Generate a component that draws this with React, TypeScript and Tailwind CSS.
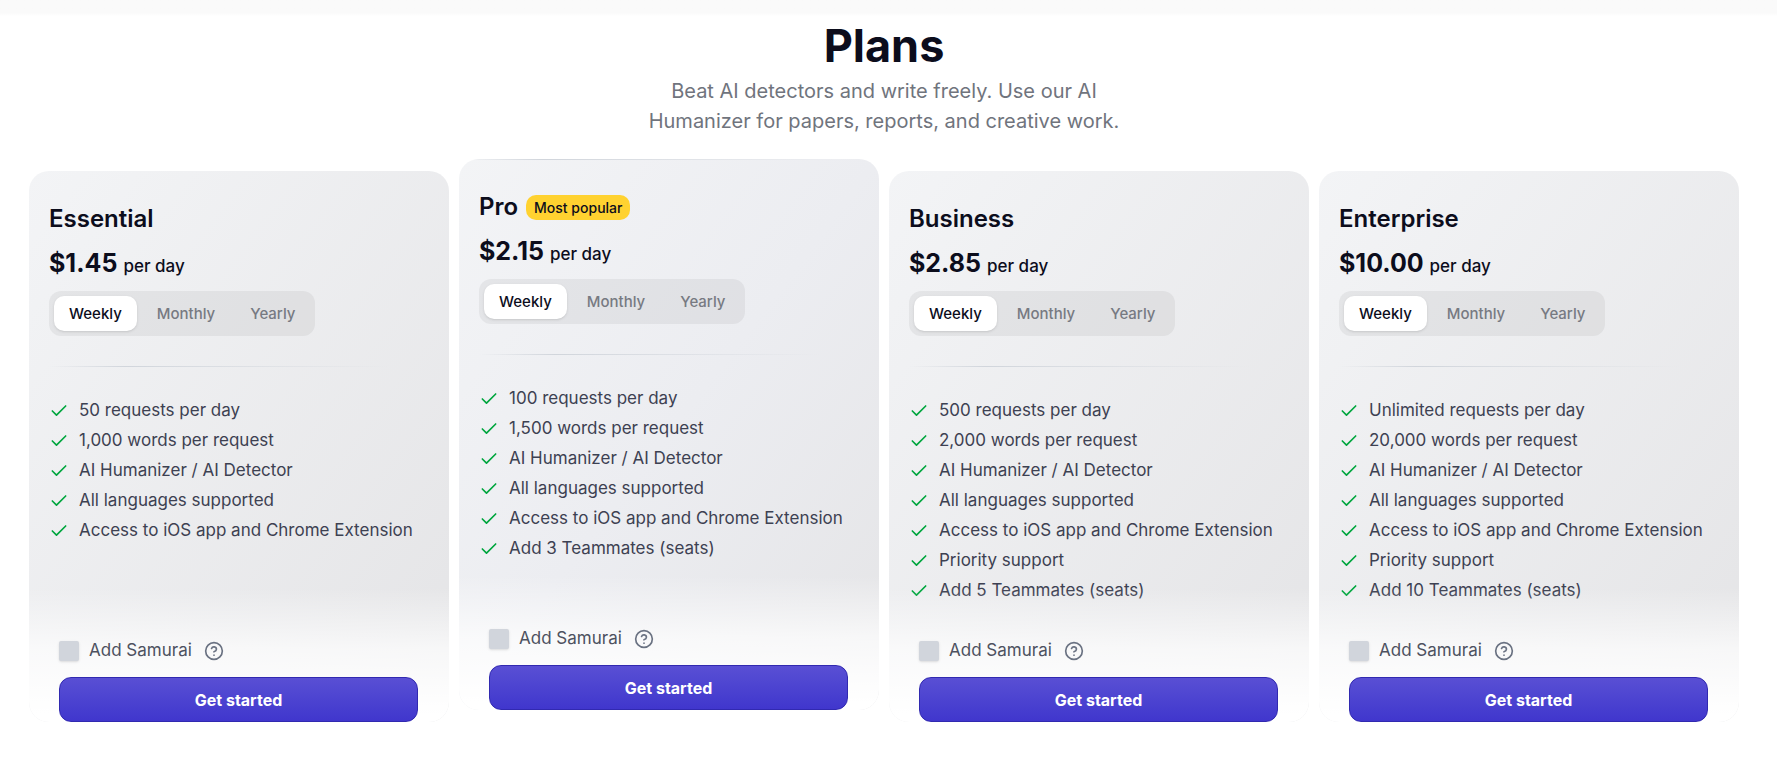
import { useState } from "react";
import { Check, CircleHelp } from "lucide-react";

type Plan = {
  name: string;
  price: string;
  features: string[];
  popular?: boolean;
};

const periods = ["Weekly", "Monthly", "Yearly"];

const plans: Plan[] = [
  {
    name: "Essential",
    price: "$1.45",
    features: [
      "50 requests per day",
      "1,000 words per request",
      "AI Humanizer / AI Detector",
      "All languages supported",
      "Access to iOS app and Chrome Extension",
    ],
  },
  {
    name: "Pro",
    price: "$2.15",
    popular: true,
    features: [
      "100 requests per day",
      "1,500 words per request",
      "AI Humanizer / AI Detector",
      "All languages supported",
      "Access to iOS app and Chrome Extension",
      "Add 3 Teammates (seats)",
    ],
  },
  {
    name: "Business",
    price: "$2.85",
    features: [
      "500 requests per day",
      "2,000 words per request",
      "AI Humanizer / AI Detector",
      "All languages supported",
      "Access to iOS app and Chrome Extension",
      "Priority support",
      "Add 5 Teammates (seats)",
    ],
  },
  {
    name: "Enterprise",
    price: "$10.00",
    features: [
      "Unlimited requests per day",
      "20,000 words per request",
      "AI Humanizer / AI Detector",
      "All languages supported",
      "Access to iOS app and Chrome Extension",
      "Priority support",
      "Add 10 Teammates (seats)",
    ],
  },
];

function Divider() {
  return (
    <div className="h-px w-full bg-linear-to-r from-transparent via-gray-300 via-20% to-transparent to-90%" />
  );
}

function PeriodTabs() {
  const [active, setActive] = useState("Weekly");
  return (
    <div role="tablist" className="flex w-fit gap-[5px] rounded-xl bg-black/5 p-[5px]">
      {periods.map((period) => (
        <button
          key={period}
          type="button"
          role="tab"
          aria-selected={active === period}
          onClick={() => setActive(period)}
          className={
            active === period
              ? "h-[35px] rounded-[10px] bg-white px-[15px] pt-0.5 text-[15px] font-medium text-[#0c0d1c] shadow-sm"
              : "h-[35px] rounded-[10px] px-[15px] pt-0.5 text-[15px] font-medium text-[#777a82]"
          }
        >
          {period}
        </button>
      ))}
    </div>
  );
}

function PlanCard({ plan }: { plan: Plan }) {
  const id = `samurai-${plan.name.toLowerCase()}`;
  return (
    <article
      className={
        plan.popular
          ? "relative flex -translate-y-3 flex-col overflow-hidden rounded-[20px] bg-linear-to-br from-gray-100 via-[#ecedf1] to-[#e4e4e6]"
          : "relative flex flex-col overflow-hidden rounded-[20px] bg-linear-to-br from-gray-100 to-[#e4e4e6]"
      }
    >
      {plan.popular && (
        <div className="absolute inset-x-0 top-0">
          <Divider />
        </div>
      )}
      <div className="flex flex-col px-5 pt-[30px]">
        <div className="flex h-9 items-center gap-2">
          <h2 className="text-2xl font-semibold text-[#0c0d1c]">{plan.name}</h2>
          {plan.popular && (
            <span className="rounded-[10px] bg-[#ffd230] px-2 text-sm leading-[25px] font-medium text-[#0c0d1c]">
              Most popular
            </span>
          )}
        </div>
        <p className="mt-2 flex h-9 items-baseline gap-1.5 text-[#0c0d1c]">
          <span className="text-[25px] leading-9 font-bold">{plan.price}</span>
          <span className="text-[17px] font-medium">per day</span>
        </p>
        <div className="mt-2.5">
          <PeriodTabs />
        </div>
        <div className="mt-[30px]">
          <Divider />
        </div>
        <ul className="mt-[29px] flex flex-col">
          {plan.features.map((feature) => (
            <li
              key={feature}
              className="flex h-[30px] items-center gap-2.5 text-[17px] whitespace-nowrap text-[#3d4152]"
            >
              <Check className="size-5 shrink-0 text-green-600" strokeWidth={2} />
              {feature}
            </li>
          ))}
        </ul>
      </div>
      <div className="relative -mt-[30px] flex grow flex-col justify-end">
        <div className="bg-linear-to-b from-white/0 from-8% via-white/70 via-50% to-white to-95% pt-[65px] pr-[31px] pl-[30px]">
          <div className="flex h-5 items-center">
            <input
              id={id}
              type="checkbox"
              className="size-5 appearance-none rounded-xs bg-gray-300 shadow-sm checked:bg-indigo-600"
            />
            <label htmlFor={id} className="ml-2.5 text-[17px] text-[#4d5160]">
              Add Samurai
            </label>
            <CircleHelp className="ml-3 size-5 text-gray-500" strokeWidth={2} />
          </div>
          <button
            type="button"
            className="mt-4 h-[45px] w-full rounded-xl border border-[#3129b0] bg-linear-to-b from-[#594fd4] to-[#4036cd] text-base font-bold text-white"
          >
            Get started
          </button>
        </div>
      </div>
    </article>
  );
}

export default function App() {
  return (
    <main className="min-h-screen bg-white pr-[38px] pl-[29px] font-[Inter,sans-serif]">
      <div className="-mr-[38px] -ml-[29px] h-4 bg-linear-to-b from-[#fafafa] from-80% to-white" />
      <header className="flex flex-col items-center text-center">
        <h1 className="text-[45px] leading-[60px] font-bold text-[#0c0d1c]">Plans</h1>
        <p className="max-w-[500px] text-xl leading-[30px] text-[#70747d]">
          Beat AI detectors and write freely. Use our AI Humanizer for papers, reports, and creative work.
        </p>
      </header>
      <section className="mt-[35px] grid grid-cols-4 gap-2.5">
        {plans.map((plan) => (
          <PlanCard key={plan.name} plan={plan} />
        ))}
      </section>
    </main>
  );
}
